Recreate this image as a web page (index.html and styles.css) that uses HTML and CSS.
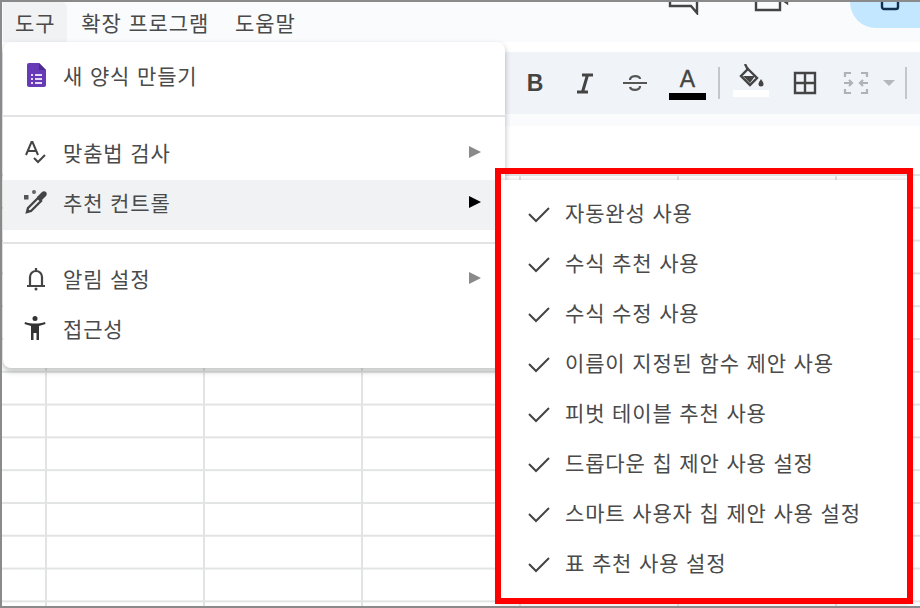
FILE: index.html
```html
<!DOCTYPE html>
<html lang="ko">
<head>
<meta charset="utf-8">
<title>도구 메뉴</title>
<link rel="stylesheet" href="styles.css">
</head>
<body>
<div class="screen">
  <div class="blur">
    <div class="app">
      <header class="menubar">
        <span class="menubar-item is-open">도구</span>
        <span class="menubar-item">확장 프로그램</span>
        <span class="menubar-item">도움말</span>
        <div class="top-actions">
          <svg class="cut-icon icon-chat" width="34" height="30" viewBox="0 0 34 30"><path d="M3 2h27v26l-6-7H3z" fill="none" stroke="#444" stroke-width="2.400"/></svg>
          <svg class="cut-icon icon-video" width="36" height="30" viewBox="0 0 36 30"><path d="M3 4h24v21H3zM27 12l7-5v11l-7-5" fill="none" stroke="#444" stroke-width="2.400"/></svg>
          <div class="share">
            <svg class="cut-icon" width="20" height="30" viewBox="0 0 20 30"><rect x="2" y="8" width="16" height="16" rx="2" fill="none" stroke="#14304f" stroke-width="2.400"/><rect x="8" y="12" width="4" height="5" fill="#14304f"/></svg>
          </div>
        </div>
      </header>
      <div class="toolbar">
        <span class="tool tool-b">B</span>
        <svg class="tool tool-i" width="24" height="24" viewBox="0 0 24 24"><path d="M9 4h11M4 21h11M14.500 4 9.500 21" fill="none" stroke="#444" stroke-width="3"/></svg>
        <svg class="tool tool-strike" width="26" height="24" viewBox="0 0 26 24"><path d="M1 12h24" stroke="#555" stroke-width="2"/><path d="M8 9c0-5 10-5 10-1M8 16c1 4 10 4 10-1" fill="none" stroke="#555" stroke-width="2.200"/></svg>
        <div class="tool-color">
          <span class="tool-a">A</span>
          <span class="bar bar-black"></span>
        </div>
        <span class="tool-sep"></span>
        <div class="tool-color tool-fill">
          <svg class="fill-icon" width="26" height="24" viewBox="0 0 26 24"><path d="M7 0l3 6" fill="none" stroke="#444" stroke-width="2.400"/><path d="M10 5l9 9-7 7-9-9z" fill="none" stroke="#444" stroke-width="2.400"/><path d="M5 12h12l-5 7z" fill="#444"/><path d="M23 15c2 3 2.500 4 2.500 5a2.500 2.500 0 0 1-5 0c0-1 .5-2 2.500-5z" fill="#444"/></svg>
          <span class="bar bar-white"></span>
        </div>
        <svg class="tool" width="24" height="24" viewBox="0 0 24 24"><path d="M2 2h20v20H2zM12 2v20M2 12h20" fill="none" stroke="#444" stroke-width="2.400"/></svg>
        <svg class="tool tool-merge" width="26" height="24" viewBox="0 0 26 24"><path d="M8 2H2v4M18 2h6v4M8 22H2v-4M18 22h6v-4M1 12h8M25 12h-8M6 9l3 3-3 3M20 9l-3 3 3 3" fill="none" stroke="#b0b3b6" stroke-width="2.200"/></svg>
        <span class="tool-caret"></span>
        <span class="tool-sep tool-sep-end"></span>
      </div>
      <div class="band"></div>
      <div class="formula"></div>
      <div class="sheet"></div>
    </div>

    <nav class="menu">
      <div class="menu-item">
        <svg class="menu-icon" width="24" height="26" viewBox="0 0 24 26"><path d="M6 1h10l7 7v15a2 2 0 0 1-2 2H6a2 2 0 0 1-2-2V3a2 2 0 0 1 2-2z" fill="#673ab7"/><path d="M16 1l7 7h-7z" fill="#4d2a92"/><path d="M8 12h2v2H8zM12 12h7v2h-7zM8 16h2v2H8zM12 16h7v2h-7zM8 20h2v2H8zM12 20h7v2h-7z" fill="#e6dcf6"/></svg>
        <span class="menu-label">새 양식 만들기</span>
      </div>
      <hr class="menu-sep">
      <div class="menu-item menu-item-up">
        <svg class="menu-icon" width="24" height="26" viewBox="0 0 24 26"><path d="M3 16 8.500 3h1L15 16M5 12h9" fill="none" stroke="#444" stroke-width="2"/><path d="M11 19l4 4 7-7" fill="none" stroke="#444" stroke-width="2"/></svg>
        <span class="menu-label">맞춤법 검사</span>
        <span class="arrow"></span>
      </div>
      <div class="menu-item menu-item-up is-active">
        <svg class="menu-icon" width="24" height="26" viewBox="0 0 24 26"><path d="M15 9 5 19l-1 4 4-1 10-10z" fill="none" stroke="#444" stroke-width="2.400"/><path d="M14 8l5-5c1-1 3-1 4 0s1 3 0 4l-5 5z" fill="#444"/><rect x="1" y="6" width="4.500" height="4.500" fill="#555"/><circle cx="11" cy="3" r="2" fill="#666"/></svg>
        <span class="menu-label">추천 컨트롤</span>
        <span class="arrow arrow-dark"></span>
      </div>
      <hr class="menu-sep menu-sep-low">
      <div class="menu-item">
        <svg class="menu-icon" width="24" height="26" viewBox="0 0 24 26"><path d="M4 21h18M7 21v-9a6 6 0 0 1 12 0v9M13 3v3" fill="none" stroke="#444" stroke-width="2.200"/><circle cx="13" cy="24" r="1.500" fill="#444"/></svg>
        <span class="menu-label">알림 설정</span>
        <span class="arrow"></span>
      </div>
      <div class="menu-item">
        <svg class="menu-icon" width="24" height="26" viewBox="0 0 24 26"><circle cx="12" cy="3.500" r="2.500" fill="#333"/><path d="M2 7c6 2 14 2 20 0l.5 2-6.500 2v14h-2.500v-7h-3v7H8V11L1.500 9z" fill="#333"/></svg>
        <span class="menu-label">접근성</span>
      </div>
    </nav>

    <nav class="submenu">
      <div class="sub-item"><svg class="check" width="22" height="17" viewBox="0 0 22 17"><path d="M1 8l7 7L21 2" fill="none" stroke="#444" stroke-width="2"/></svg><span class="menu-label">자동완성 사용</span></div>
      <div class="sub-item"><svg class="check" width="22" height="17" viewBox="0 0 22 17"><path d="M1 8l7 7L21 2" fill="none" stroke="#444" stroke-width="2"/></svg><span class="menu-label">수식 추천 사용</span></div>
      <div class="sub-item"><svg class="check" width="22" height="17" viewBox="0 0 22 17"><path d="M1 8l7 7L21 2" fill="none" stroke="#444" stroke-width="2"/></svg><span class="menu-label">수식 수정 사용</span></div>
      <div class="sub-item"><svg class="check" width="22" height="17" viewBox="0 0 22 17"><path d="M1 8l7 7L21 2" fill="none" stroke="#444" stroke-width="2"/></svg><span class="menu-label">이름이 지정된 함수 제안 사용</span></div>
      <div class="sub-item"><svg class="check" width="22" height="17" viewBox="0 0 22 17"><path d="M1 8l7 7L21 2" fill="none" stroke="#444" stroke-width="2"/></svg><span class="menu-label">피벗 테이블 추천 사용</span></div>
      <div class="sub-item"><svg class="check" width="22" height="17" viewBox="0 0 22 17"><path d="M1 8l7 7L21 2" fill="none" stroke="#444" stroke-width="2"/></svg><span class="menu-label">드롭다운 칩 제안 사용 설정</span></div>
      <div class="sub-item"><svg class="check" width="22" height="17" viewBox="0 0 22 17"><path d="M1 8l7 7L21 2" fill="none" stroke="#444" stroke-width="2"/></svg><span class="menu-label">스마트 사용자 칩 제안 사용 설정</span></div>
      <div class="sub-item"><svg class="check" width="22" height="17" viewBox="0 0 22 17"><path d="M1 8l7 7L21 2" fill="none" stroke="#444" stroke-width="2"/></svg><span class="menu-label">표 추천 사용 설정</span></div>
    </nav>
  </div>
  <div class="highlight"></div>
</div>
</body>
</html>
```
FILE: styles.css
```css
* { box-sizing: border-box; }
html, body { margin: 0; padding: 0; background: #fff; }
body { width: 920px; height: 608px; overflow: hidden; font-family: "Noto Sans CJK KR", "Noto Sans", sans-serif; }
.screen { position: relative; width: 920px; height: 608px; overflow: hidden; border-top: 2px solid #8a8a8a; border-left: 2px solid #8a8a8a; border-bottom: 2px solid #8a8a8a; }
.blur { position: absolute; inset: 0; filter: blur(0.55px); }
.app { display: flex; flex-direction: column; height: 100%; background: #fff; }

.menubar { display: flex; align-items: stretch; gap: 2px; height: 40px; padding-left: 1px; background: #f9fbfd; flex: none; }
.menubar-item { display: flex; align-items: center; padding: 0 12px; border-radius: 0 6px 0 0; font-size: 21px; letter-spacing: 0.85px; color: #4a4a4a; }
.menubar-item.is-open { background: #f0f2f4; }
.top-actions { display: flex; align-items: flex-start; margin-left: auto; }
.cut-icon { display: block; margin-top: -17px; flex: none; }
.icon-chat { margin-right: 52px; }
.icon-video { margin-right: 61px; }
.share { display: flex; width: 70px; height: 26px; padding-left: 30px; background: #c2e7ff; border-bottom-left-radius: 26px; }

.toolbar { display: flex; align-items: center; height: 62px; margin-top: 10px; padding-left: 521px; background: #f0f4f9; flex: none; }
.tool { flex: none; margin-right: 26px; display: block; }
.tool-b { width: 24px; font: 700 23px/24px "Liberation Sans", sans-serif; color: #444; text-align: center; }
.tool-i { margin-right: 25px; }
.tool-strike { margin-right: 21px; }
.tool-color { display: flex; flex-direction: column; align-items: center; width: 37px; flex: none; }
.tool-fill { width: 36px; margin-right: 24px; margin-top: -6px; }
.fill-icon { display: block; margin-bottom: 1px; }
.tool-a { font: 400 23px/25px "Liberation Sans", sans-serif; -webkit-text-stroke: 0.4px #444; color: #444; height: 25px; }
.bar { display: block; width: 100%; height: 7px; margin-top: 1px; }
.bar-black { background: #000; }
.bar-white { background: #fff; }
.tool-sep { width: 2px; height: 32px; margin: 0 13px 0 12px; background: #c4c7c9; flex: none; }
.tool-sep-end { margin: 0 0 0 10px; }
.tool-merge { margin-right: 14px; }
.tool-caret { width: 0; height: 0; border-left: 6px solid transparent; border-right: 6px solid transparent; border-top: 6px solid #b5b8bb; flex: none; }
.band { height: 12px; background: #f9fbfd; flex: none; }
.formula { height: 48px; background: #fff; flex: none; }
.sheet {
  flex: 1;
  background-color: #fff;
  background-image:
    linear-gradient(to right, #e2e3e3 2px, transparent 2px),
    linear-gradient(to bottom, #e2e3e3 2px, transparent 2px);
  background-size: 158px 100%, 100% 32.8px;
  background-position: 43px 0, 0 0;
}

.menu { position: absolute; left: 1px; top: 40px; width: 502px; height: 326px; padding-top: 10px; background: #fff; border-radius: 8px; box-shadow: 0 3px 5px 1px rgba(60, 64, 67, 0.28); }
.menu-item { display: flex; align-items: center; height: 50px; padding: 0 24px 4px 20px; }
.menu-item-up { padding-bottom: 6px; }
.menu-item.is-active { background: #f0f2f4; margin-right: 8px; padding-right: 16px; }
.menu-icon { flex: none; margin-right: 16px; }
.menu-label { font-size: 21px; letter-spacing: 0.85px; color: #4a4a4a; white-space: nowrap; }
.menu-sep { height: 2px; margin: 13px 0 13px 0; border: 0; background: #e3e3e6; }
.menu-sep-low { margin: 12px 0 11px; }
.arrow { width: 0; height: 0; margin-left: auto; border-top: 6px solid transparent; border-bottom: 6px solid transparent; border-left: 12px solid #8a8a8a; }
.arrow-dark { border-left-color: #000; }

.submenu { position: absolute; left: 496px; top: 178px; width: 412px; height: 424px; padding-top: 9px; background: #fff; box-shadow: 0 0 5px rgba(60, 64, 67, 0.2); }
.sub-item { display: flex; align-items: center; height: 50px; padding: 0 0 4px 30px; }
.check { flex: none; margin: 5px 15px 0 0; }

.highlight { position: absolute; left: 493px; top: 166px; width: 418px; height: 436px; border: 6px solid #f00; }
```
